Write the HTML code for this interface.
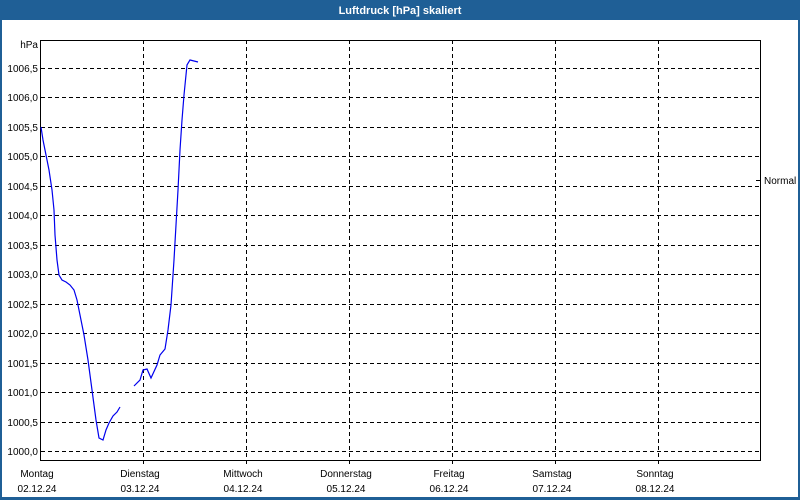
<!DOCTYPE html><html><head><style>body{margin:0;width:800px;height:500px;overflow:hidden;background:#fff;font-family:"Liberation Sans",sans-serif}</style></head><body>
<svg width="800" height="500" xmlns="http://www.w3.org/2000/svg" style="display:block">
<rect x="0" y="0" width="800" height="500" fill="#1f5f96"/>
<rect x="2" y="20" width="796" height="477" fill="#fff"/>
<text x="400" y="14" font-size="11" font-weight="bold" fill="#fff" text-anchor="middle" font-family="Liberation Sans,sans-serif">Luftdruck [hPa] skaliert</text>
<g stroke="#000" stroke-width="1" stroke-dasharray="4,3" fill="none">
<path d="M41 68.5H760M41 97.5H760M41 127.5H760M41 156.5H760M41 186.5H760M41 215.5H760M41 245.5H760M41 274.5H760M41 304.5H760M41 333.5H760M41 363.5H760M41 392.5H760M41 422.5H760M41 451.5H760"/>
<path d="M143.5 40V466M246.5 40V466M349.5 40V466M452.5 40V466M555.5 40V466M658.5 40V466"/>
</g>
<path d="M40.5 40V461M40 40.5H761M760.5 40V461M40 460.5H761" stroke="#000" fill="none"/>
<path d="M756 180.5H760" stroke="#000"/>
<g font-size="10" fill="#000" font-family="Liberation Sans,sans-serif">
<text x="38" y="48" text-anchor="end">hPa</text>
<text x="38" y="72" text-anchor="end">1006,5</text>
<text x="38" y="101" text-anchor="end">1006,0</text>
<text x="38" y="131" text-anchor="end">1005,5</text>
<text x="38" y="160" text-anchor="end">1005,0</text>
<text x="38" y="190" text-anchor="end">1004,5</text>
<text x="38" y="219" text-anchor="end">1004,0</text>
<text x="38" y="249" text-anchor="end">1003,5</text>
<text x="38" y="278" text-anchor="end">1003,0</text>
<text x="38" y="308" text-anchor="end">1002,5</text>
<text x="38" y="337" text-anchor="end">1002,0</text>
<text x="38" y="367" text-anchor="end">1001,5</text>
<text x="38" y="396" text-anchor="end">1001,0</text>
<text x="38" y="426" text-anchor="end">1000,5</text>
<text x="38" y="455" text-anchor="end">1000,0</text>
<text x="764" y="184">Normal</text>
<g text-anchor="middle">
<text x="37" y="477">Montag</text><text x="37" y="492">02.12.24</text>
<text x="140" y="477">Dienstag</text><text x="140" y="492">03.12.24</text>
<text x="243" y="477">Mittwoch</text><text x="243" y="492">04.12.24</text>
<text x="346" y="477">Donnerstag</text><text x="346" y="492">05.12.24</text>
<text x="449" y="477">Freitag</text><text x="449" y="492">06.12.24</text>
<text x="552" y="477">Samstag</text><text x="552" y="492">07.12.24</text>
<text x="655" y="477">Sonntag</text><text x="655" y="492">08.12.24</text>
</g></g>
<g stroke="#0000ee" stroke-width="1.2" fill="none">
<polyline points="41,127 43,140 46,155 49,170 52,190 54,210 55,235 57,260 59,275 62,280 66,282 70,285 74,290 77,300 80,315 84,335 88,360 92,390 96,420 99,438 103,440 106,430 109,423 113,416 117,412 120,407"/>
<polyline points="134,386 140,380 143,370 147,369 151,378 157,365 160,355 165,349 168,330 171,305 174,260 176,225 178,190 180,150 182,120 184,95 187,65 190,60 194,61 198,62"/>
</g>
</svg></body></html>
